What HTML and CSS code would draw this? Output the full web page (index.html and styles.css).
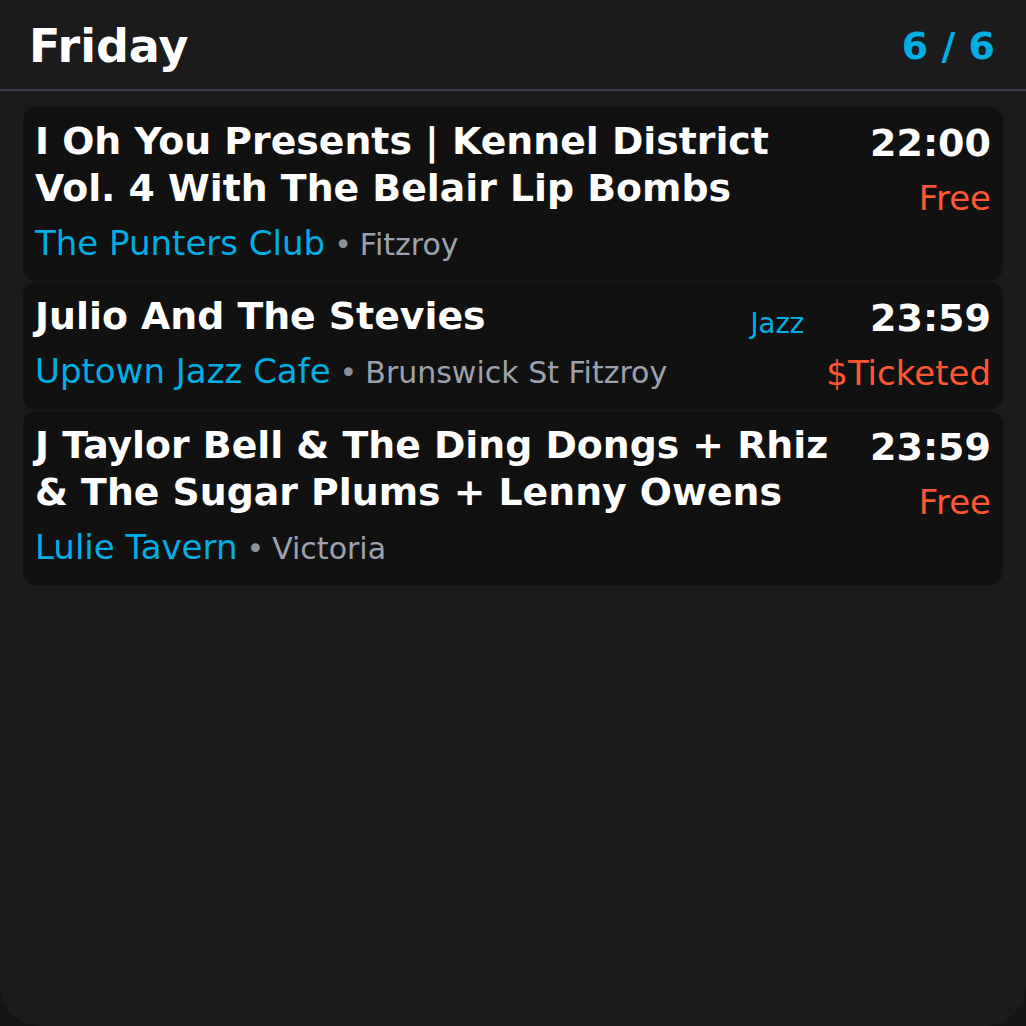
FILE: index.html
```html
<!DOCTYPE html>
<html lang="en">
<head>
<meta charset="utf-8">
<title>Friday</title>
<link rel="stylesheet" href="styles.css">
</head>
<body>
<div class="screen">
  <header class="header">
    <h1 class="day">Friday</h1>
    <div class="count">6 / 6</div>
  </header>
  <main class="list">
    <article class="card">
      <div class="main">
        <div class="title-row">
          <h2 class="title">I Oh You Presents | Kennel District Vol. 4 With The Belair Lip Bombs</h2>
        </div>
        <div class="venue-line"><span class="venue">The Punters Club</span><span class="sep">•</span><span class="place">Fitzroy</span></div>
      </div>
      <div class="side">
        <div class="time">22:00</div>
        <div class="price">Free</div>
      </div>
    </article>
    <article class="card">
      <div class="main">
        <div class="title-row">
          <h2 class="title">Julio And The Stevies</h2>
          <span class="tag">Jazz</span>
        </div>
        <div class="venue-line"><span class="venue">Uptown Jazz Cafe</span><span class="sep">•</span><span class="place">Brunswick St Fitzroy</span></div>
      </div>
      <div class="side">
        <div class="time">23:59</div>
        <div class="price">$Ticketed</div>
      </div>
    </article>
    <article class="card">
      <div class="main">
        <div class="title-row">
          <h2 class="title">J Taylor Bell &amp; The Ding Dongs + Rhiz &amp; The Sugar Plums + Lenny Owens</h2>
        </div>
        <div class="venue-line"><span class="venue">Lulie Tavern</span><span class="sep">•</span><span class="place">Victoria</span></div>
      </div>
      <div class="side">
        <div class="time">23:59</div>
        <div class="price">Free</div>
      </div>
    </article>
  </main>
</div>
</body>
</html>
```

FILE: styles.css
```css
* { box-sizing: border-box; }

html, body {
  margin: 0;
  padding: 0;
  background: #151515;
}

body {
  font-family: "DejaVu Sans", "Liberation Sans", sans-serif;
  color: #ffffff;
}

.screen {
  width: 1026px;
  height: 1026px;
  background: #1b1b1b;
  border-radius: 0 0 40px 40px;
  overflow: hidden;
}

.header {
  height: 91px;
  display: flex;
  align-items: center;
  justify-content: space-between;
  padding: 2px 31px 0 29px;
  border-bottom: 2px solid #3a3f4a;
}

.day {
  margin: 0;
  font-size: 46px;
  font-weight: bold;
  line-height: 1;
  color: #ffffff;
}

.count {
  font-size: 38px;
  font-weight: bold;
  line-height: 1;
  color: #00aee3;
}

.list {
  padding: 16px 23px 0;
  display: flex;
  flex-direction: column;
  gap: 1px;
}

.card {
  background: #111111;
  border-radius: 14px;
  padding: 11px 12px 12px 12px;
  display: flex;
  gap: 22px;
}

.main {
  flex: 1;
  min-width: 0;
}

.title-row {
  display: flex;
  align-items: center;
  gap: 20px;
}

.title {
  flex: 1;
  margin: 0;
  font-size: 37.8px;
  font-weight: bold;
  line-height: 47px;
}

.tag {
  font-size: 27.5px;
  line-height: 1;
  color: #00aee3;
  margin-top: 14px;
}

.venue-line {
  margin-top: 6px;
  font-size: 34px;
  line-height: 51px;
  white-space: nowrap;
}

.venue {
  color: #00aee3;
}

.sep {
  color: #8b9099;
  font-size: 30px;
  line-height: 1;
  margin: 0 8px 0 9px;
}

.place {
  color: #9ca2ad;
  font-size: 30px;
  line-height: 1;
}

.side {
  display: flex;
  flex-direction: column;
  align-items: flex-end;
}

.time {
  font-size: 38px;
  font-weight: bold;
  line-height: 50px;
}

.price {
  margin-top: 5px;
  font-size: 34px;
  line-height: 50px;
  color: #ff5733;
}
```
